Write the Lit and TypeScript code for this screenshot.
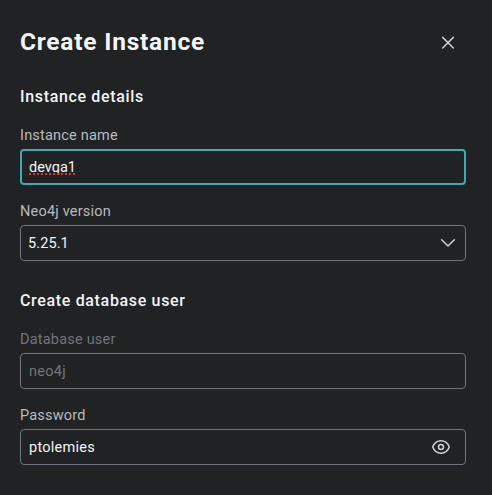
import { LitElement, html, css } from "lit";
import { customElement } from "lit/decorators.js";

@customElement("app-root")
export class AppRoot extends LitElement {
  static styles = css`
    :host {
      display: block;
      box-sizing: border-box;
      height: 495px;
      padding: 24px 26px 0 20px;
      background: #202224;
      color: #f2f4f6;
      font: 400 14.5px/20px Roboto, "Public Sans", sans-serif;
      overflow: hidden;
    }
    * { box-sizing: border-box; }
    header {
      display: flex;
      align-items: center;
      justify-content: space-between;
      height: 36px;
      padding-right: 10px;
    }
    h1, h2 { margin: 0; }
    h1 { font-size: 24.5px; line-height: 36px; font-weight: 700; letter-spacing: 0.78px; }
    h2 { font-size: 16px; line-height: 24px; font-weight: 500; letter-spacing: 0.66px; }
    svg { display: block; fill: none; stroke: #cfd1d4; stroke-width: 1.5; stroke-linecap: round; stroke-linejoin: round; }
    section { padding-top: 25px; }
    section + section { padding-top: 28px; }
    .field { display: flex; flex-direction: column; gap: 3px; margin-top: 17px; }
    .label { color: #b9bbbf; letter-spacing: 0.2px; }
    .box {
      display: flex;
      align-items: center;
      justify-content: space-between;
      height: 36px;
      padding: 1px 8px 0;
      border: 1px solid #6f757e;
      border-radius: 4px;
      letter-spacing: 0.26px;
    }
    .box > span { position: relative; top: 0.5px; }
    .focused { border: 2px solid #3fa9b5; padding: 0 7px; letter-spacing: 0; }
    .version { padding: 0 9px 0 7px; letter-spacing: 0.1px; }
    .password { padding: 0 14px 0 8px; }
    .disabled .label, .disabled .box { color: #6f757e; }
    .misspelt::after {
      content: "";
      position: absolute;
      left: 0;
      right: 0;
      bottom: 3px;
      height: 2px;
      background: repeating-linear-gradient(90deg, #e0303a 0 2px, transparent 2px 4px);
    }
  `;

  render() {
    return html`
      <header>
        <h1>Create Instance</h1>
        <svg width="16" height="16" viewBox="0 0 16 16"><path d="M2.7 3.4 13.3 14M13.3 3.4 2.7 14" /></svg>
      </header>
      <section>
        <h2>Instance details</h2>
        <div class="field">
          <span class="label">Instance name</span>
          <div class="box focused"><span class="misspelt">devqa1</span></div>
        </div>
        <div class="field">
          <span class="label">Neo4j version</span>
          <div class="box version">
            <span>5.25.1</span>
            <svg width="16" height="16" viewBox="0 0 16 16"><path d="M1.7 4.7 8 11 14.3 4.7" /></svg>
          </div>
        </div>
      </section>
      <section>
        <h2>Create database user</h2>
        <div class="field disabled">
          <span class="label">Database user</span>
          <div class="box"><span>neo4j</span></div>
        </div>
        <div class="field">
          <span class="label">Password</span>
          <div class="box password">
            <span>ptolemies</span>
            <svg width="20" height="20" viewBox="0 0 20 20">
              <path d="M1.7 10C3.1 6.2 6 3.8 10 3.8S16.9 6.2 18.3 10C16.9 13.8 14 16.2 10 16.2S3.1 13.8 1.7 10Z" />
              <circle cx="10" cy="10" r="2.5" />
            </svg>
          </div>
        </div>
      </section>
    `;
  }
}
